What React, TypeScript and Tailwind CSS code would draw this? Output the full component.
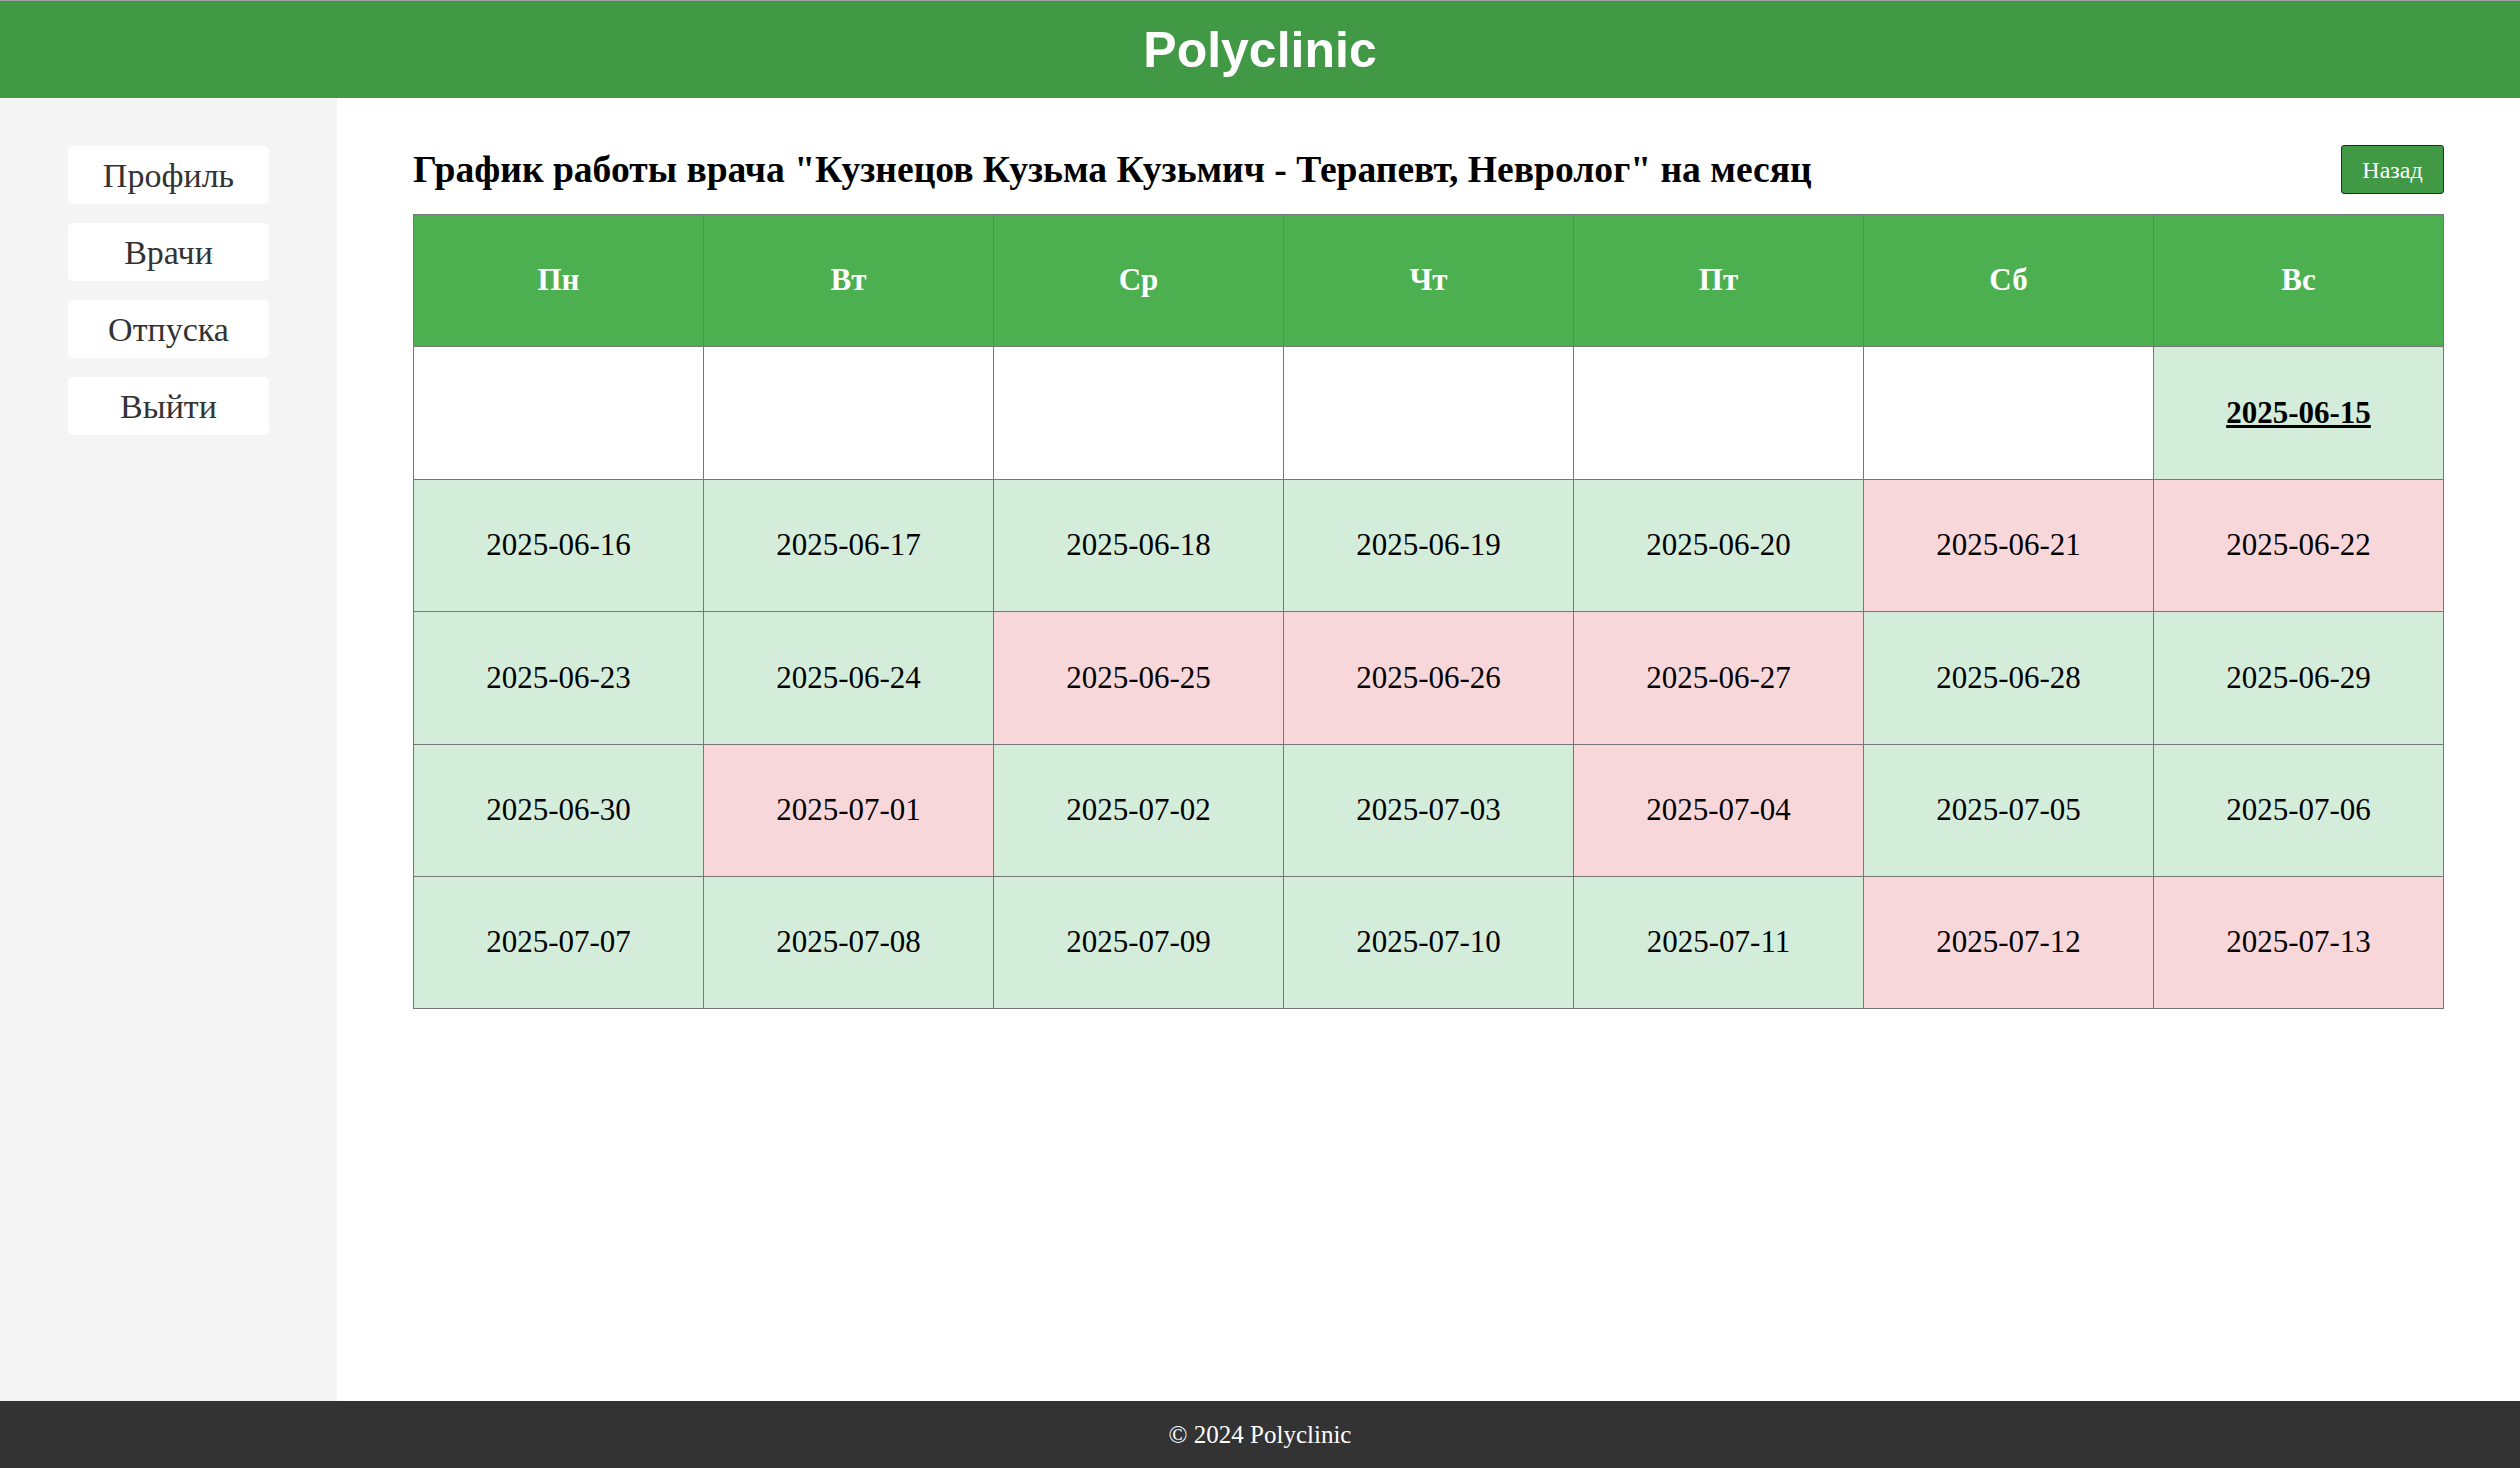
import React from 'react';

type Cell = { date: string; status: 'free' | 'busy' | 'empty'; today?: boolean };

const days = ['Пн', 'Вт', 'Ср', 'Чт', 'Пт', 'Сб', 'Вс'];

const e: Cell = { date: '', status: 'empty' };
const g = (date: string, today = false): Cell => ({ date, status: 'free', today });
const r = (date: string): Cell => ({ date, status: 'busy' });

const weeks: Cell[][] = [
  [e, e, e, e, e, e, g('2025-06-15', true)],
  [g('2025-06-16'), g('2025-06-17'), g('2025-06-18'), g('2025-06-19'), g('2025-06-20'), r('2025-06-21'), r('2025-06-22')],
  [g('2025-06-23'), g('2025-06-24'), r('2025-06-25'), r('2025-06-26'), r('2025-06-27'), g('2025-06-28'), g('2025-06-29')],
  [g('2025-06-30'), r('2025-07-01'), g('2025-07-02'), g('2025-07-03'), r('2025-07-04'), g('2025-07-05'), g('2025-07-06')],
  [g('2025-07-07'), g('2025-07-08'), g('2025-07-09'), g('2025-07-10'), g('2025-07-11'), r('2025-07-12'), r('2025-07-13')],
];

const navItems = ['Профиль', 'Врачи', 'Отпуска', 'Выйти'];

const serif = "font-['Liberation_Serif','Times_New_Roman',serif]";

export default function App() {
  return (
    <div className={`min-h-screen flex flex-col ${serif}`}>
      {/* Header */}
      <header className="h-[98px] border-t border-[#a0a0a0] bg-[#419845] flex items-center justify-center">
        <h1 className="font-['Liberation_Sans',Arial,sans-serif] font-bold text-[50px] text-white leading-none">
          Polyclinic
        </h1>
      </header>

      <div className="flex flex-1">
        {/* Sidebar */}
        <aside className="w-[337px] shrink-0 bg-[#f4f4f4] pt-[48px] flex flex-col items-center gap-[19px]">
          {navItems.map((item) => (
            <a
              key={item}
              href="#"
              className="w-[201px] h-[58px] bg-white rounded-[5px] flex items-center justify-center text-[34px] text-[#333]"
            >
              {item}
            </a>
          ))}
        </aside>

        {/* Main */}
        <main className="flex-1 px-[76px] pt-[47px] pb-10">
          <div className="flex items-center justify-between h-[49px]">
            <h2 className="font-bold text-[37.6px] text-black leading-none">
              График работы врача "Кузнецов Кузьма Кузьмич - Терапевт, Невролог" на месяц
            </h2>
            <button className="w-[103px] h-[49px] bg-[#419845] border border-[#2a2a2a] rounded-[3px] text-white text-[24px]">
              Назад
            </button>
          </div>

          <table className="mt-[20px] w-full table-fixed border-collapse">
            <thead>
              <tr className="h-[132.4px]">
                {days.map((d) => (
                  <th key={d} className="border border-[#777] bg-[#4caf50] text-white font-bold text-[31px]">
                    {d}
                  </th>
                ))}
              </tr>
            </thead>
            <tbody>
              {weeks.map((week, i) => (
                <tr key={i} className="h-[132.4px]">
                  {week.map((c, j) => (
                    <td
                      key={j}
                      className={`border border-[#777] text-center text-[31px] text-black ${
                        c.status === 'free' ? 'bg-[#d4edda]' : c.status === 'busy' ? 'bg-[#f8d7da]' : 'bg-white'
                      }`}
                    >
                      {c.today ? <span className="font-bold underline">{c.date}</span> : c.date}
                    </td>
                  ))}
                </tr>
              ))}
            </tbody>
          </table>
        </main>
      </div>

      {/* Footer */}
      <footer className="h-[67px] bg-[#333] flex items-center justify-center text-white text-[25px]">
        © 2024 Polyclinic
      </footer>
    </div>
  );
}
